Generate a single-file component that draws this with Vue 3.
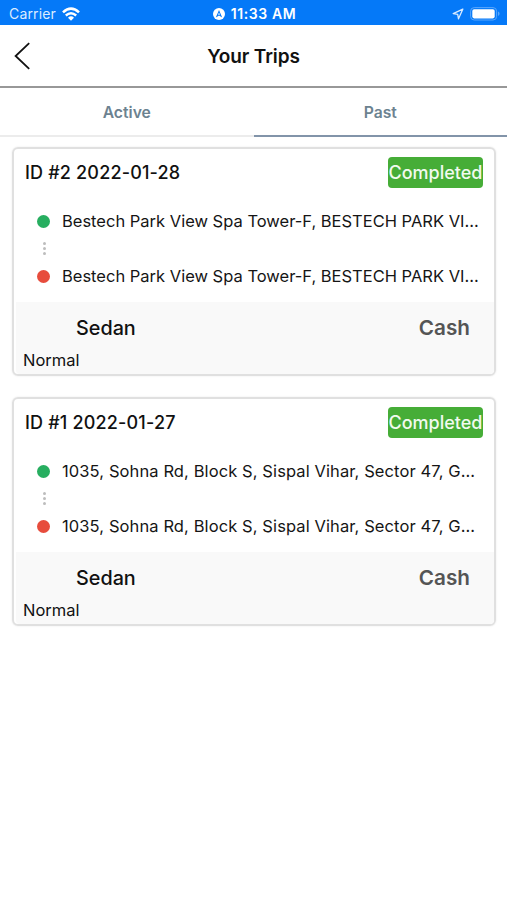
<script setup>
const tabs = [
  { label: 'Active', selected: false },
  { label: 'Past', selected: true },
]

const trips = [
  {
    id: 2,
    title: 'ID #2 2022-01-28',
    address: 'Bestech Park View Spa Tower-F, BESTECH PARK VI...',
  },
  {
    id: 1,
    title: 'ID #1 2022-01-27',
    address: '1035, Sohna Rd, Block S, Sispal Vihar, Sector 47, G...',
  },
]
</script>

<template>
  <div class="screen">
    <div class="status">
      <div class="status-left">
        <span class="carrier">Carrier</span>
        <svg class="wifi" width="18" height="14" viewBox="0 0 18 14">
          <path d="M1 5.4Q9 -2.1 17 5.4" fill="none" stroke="#fff" stroke-width="2.6" />
          <path d="M3.8 8.5Q9 3.9 14.2 8.5" fill="none" stroke="#fff" stroke-width="2.4" />
          <path d="M6 10.7Q9 8 12 10.7L9 13.8Z" fill="#fff" />
        </svg>
      </div>
      <div class="status-center">
        <svg class="loc" width="12" height="12" viewBox="0 0 12 12">
          <circle cx="6" cy="6" r="6" fill="#fff" />
          <path d="M6 2L9.2 9.4L6 7.4L2.8 9.4Z" fill="#0579f8" />
          <path d="M6 4.6L7.1 7.1L6 6.5L4.9 7.1Z" fill="#fff" />
        </svg>
        <span class="clock">11:33 AM</span>
      </div>
      <div class="status-right">
        <svg width="12" height="12" viewBox="0 0 12 12">
          <path d="M10.8 1.2L1.2 5.6L5.7 6.3L6.5 10.8Z" fill="none" stroke="#d9ebff" stroke-width="1.3" stroke-linejoin="round" />
        </svg>
        <svg width="30" height="14" viewBox="0 0 30 14">
          <rect x="0.6" y="0.6" width="26" height="12.4" rx="3.6" fill="none" stroke="#5aa7fc" stroke-width="1" />
          <rect x="2.3" y="2.2" width="22.4" height="9.2" rx="1.8" fill="#fff" />
          <path d="M28 4.6Q29.6 5.2 29.6 6.8T28 9Z" fill="#5aa7fc" />
        </svg>
      </div>
    </div>

    <header class="header">
      <svg class="back" width="18" height="28" viewBox="0 0 18 28">
        <path d="M15.2 1.2L1.6 14L15.2 26.8" fill="none" stroke="#111" stroke-width="1.8" />
      </svg>
      <h1 class="title">Your Trips</h1>
    </header>

    <nav class="tabs">
      <div v-for="tab in tabs" :key="tab.label" class="tab" :class="{ selected: tab.selected }">
        <span>{{ tab.label }}</span>
      </div>
    </nav>

    <main class="list">
      <article v-for="trip in trips" :key="trip.id" class="card">
        <div class="card-head">
          <span class="trip-id">{{ trip.title }}</span>
          <span class="badge">Completed</span>
        </div>
        <div class="route">
          <div class="stop">
            <i class="dot green"></i>
            <span class="address" :class="{ numeric: trip.id === 1 }">{{ trip.address }}</span>
          </div>
          <div class="between"><i></i><i></i><i></i></div>
          <div class="stop">
            <i class="dot red"></i>
            <span class="address" :class="{ numeric: trip.id === 1 }">{{ trip.address }}</span>
          </div>
        </div>
        <div class="card-foot">
          <div class="fare">
            <span class="vehicle">Sedan</span>
            <span class="payment">Cash</span>
          </div>
          <div class="kind">Normal</div>
        </div>
      </article>
    </main>
  </div>
</template>

<style>
body {
  background: #fff;
}
</style>

<style scoped>
.screen {
  width: 507px;
  height: 900px;
  overflow: hidden;
  background: #fff;
  color: #111;
  font-family: Inter, "Liberation Sans", sans-serif;
  display: flex;
  flex-direction: column;
}
.screen span,
.title,
.kind {
  white-space: nowrap;
}
.status {
  height: 25px;
  flex: none;
  padding: 2px 7px 0 9px;
  box-sizing: border-box;
  background: #0579f8;
  color: #fff;
  display: grid;
  grid-template-columns: 1fr auto 1fr;
  align-items: center;
}
.status-left,
.status-center,
.status-right {
  display: flex;
  align-items: center;
}
.carrier {
  font-size: 14px;
  letter-spacing: 0.15px;
  color: #dcecff;
}
.wifi {
  margin-left: 6px;
}
.status-center {
  gap: 6px;
}
.clock {
  font-size: 14px;
  font-weight: 600;
  letter-spacing: 0.6px;
}
.status-right {
  justify-content: flex-end;
  gap: 6px;
}
.header {
  height: 63px;
  flex: none;
  box-sizing: border-box;
  border-bottom: 2px solid #989898;
  display: grid;
  grid-template-columns: 40px 1fr 40px;
  align-items: center;
}
.back {
  margin-left: 14px;
}
.title {
  margin: 0;
  padding-top: 2px;
  text-align: center;
  font-size: 19px;
  font-weight: 600;
  letter-spacing: -0.1px;
}
.tabs {
  height: 49px;
  flex: none;
  display: flex;
}
.tab {
  flex: 1;
  box-sizing: border-box;
  padding-top: 2px;
  border-bottom: 2px solid #ececec;
  display: flex;
  align-items: center;
  justify-content: center;
  color: #6c8290;
  font-size: 15.7px;
  font-weight: 600;
}
.tab.selected {
  border-color: #8294a9;
}
.list {
  padding: 10px 12px;
  display: flex;
  flex-direction: column;
  gap: 21px;
}
.card {
  height: 229px;
  width: 484px;
  box-sizing: border-box;
  border: 2px solid #e0e0e0;
  border-radius: 6px;
  box-shadow: 0 0 2px rgba(0, 0, 0, 0.1);
  display: flex;
  flex-direction: column;
}
.card-head {
  height: 47px;
  padding: 0 11px;
  display: flex;
  align-items: center;
  justify-content: space-between;
}
.trip-id {
  font-size: 18px;
  font-weight: 500;
  letter-spacing: 0.17px;
}
.badge {
  width: 95px;
  height: 31px;
  border-radius: 4px;
  background: #46ad37;
  color: #f1faef;
  font-size: 18px;
  font-weight: 500;
  display: flex;
  align-items: center;
  justify-content: center;
}
.route {
  height: 106px;
  padding: 10px 0 0 23px;
  box-sizing: border-box;
  display: flex;
  flex-direction: column;
}
.stop {
  height: 30px;
  display: flex;
  align-items: center;
  gap: 12px;
}
.dot {
  width: 13px;
  height: 13px;
  border-radius: 50%;
}
.green {
  background: #27ae60;
}
.red {
  background: #e74c3c;
}
.address {
  font-size: 16.5px;
  color: #151515;
}
.address.numeric {
  letter-spacing: 0.1px;
}
.between {
  height: 25px;
  width: 14px;
  display: flex;
  flex-direction: column;
  align-items: center;
  justify-content: center;
  gap: 2px;
}
.between i {
  width: 3px;
  height: 3px;
  border-radius: 50%;
  background: #bdbdbd;
}
.card-foot {
  flex: 1;
  margin-left: 2px;
  background: #f9f9f9;
  border-radius: 0 0 4px 4px;
}
.fare {
  height: 47px;
  padding: 4px 24px 0 60px;
  box-sizing: border-box;
  display: flex;
  align-items: center;
  justify-content: space-between;
}
.vehicle {
  font-size: 19.8px;
  font-weight: 500;
}
.payment {
  font-size: 20.7px;
  font-weight: 600;
  color: #555;
}
.kind {
  padding-left: 7px;
  font-size: 16.5px;
  line-height: 22px;
}
</style>
